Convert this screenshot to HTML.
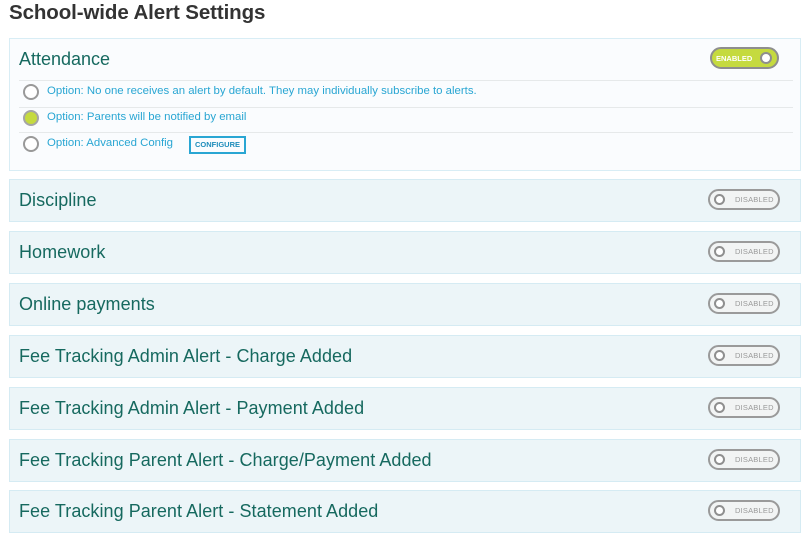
<!DOCTYPE html>
<html><head><meta charset="utf-8"><style>
*{margin:0;padding:0;box-sizing:border-box}
body{width:809px;height:538px;background:#fff;font-family:"Liberation Sans",sans-serif;position:relative;overflow:hidden}
h1{position:absolute;left:9px;top:1px;font-size:20.5px;font-weight:bold;color:#333;letter-spacing:-0.1px}
.p{position:absolute;left:9px;width:792px;height:43px;background:#ecf5f8;border:1px solid #d5ebf3}
.p .t{position:absolute;left:9px;top:10px;font-size:18px;color:#16695f;letter-spacing:0.05px}
.tg{position:absolute;right:20px;top:9px;width:72px;height:21px;border:2px solid #9a9a9a;border-radius:11px;background:#f2f4f4}
.tg .k{position:absolute;left:4px;top:3px;width:11px;height:11px;border:2px solid #8f8f8f;border-radius:50%;background:#fff}
.tg span{position:absolute;left:25px;top:4px;font-size:7.5px;color:#999;letter-spacing:0.2px}
.att{position:absolute;left:9px;top:38px;width:792px;height:133px;background:#fafcfe;border:1px solid #d8edf5}
.att .t{position:absolute;left:9px;top:10px;font-size:18px;color:#16695f}
.en{position:absolute;left:700px;top:8px;width:69px;height:22px;border:2px solid #8e8e8e;border-radius:11px;background:#c5da3f}
.en span{position:absolute;left:4px;top:5px;font-size:7.5px;color:#fff;font-weight:bold}
.en .k{position:absolute;right:5px;top:3px;width:12px;height:12px;border:2px solid #8e8e8e;border-radius:50%;background:#fff}
.ln{position:absolute;left:9px;width:774px;height:1px;background:#e6e9ea}
.o{position:absolute;left:13px;width:16px;height:16px;border:2px solid #999;border-radius:50%;background:#fff}
.o.on{background:#c5da3f;border-color:#a5a5a5}
.ot{position:absolute;left:37px;font-size:11.4px;color:#29a6d3}
.cf{position:absolute;left:179px;width:57px;height:18px;border:2px solid #29a6d3;font-size:7.5px;color:#1e8dbb;text-align:center;line-height:14px;font-weight:bold}
</style></head><body>
<h1>School-wide Alert Settings</h1>
<div class="att">
<div class="t">Attendance</div>
<div class="en"><span>ENABLED</span><div class="k"></div></div>
<div class="ln" style="top:41px"></div>
<div class="o" style="top:45px"></div><div class="ot" style="top:46px">Option: No one receives an alert by default. They may individually subscribe to alerts.</div>
<div class="ln" style="top:68px"></div>
<div class="o on" style="top:71px"></div><div class="ot" style="top:72px">Option: Parents will be notified by email</div>
<div class="ln" style="top:93px"></div>
<div class="o" style="top:97px"></div><div class="ot" style="top:98px">Option: Advanced Config</div>
<div class="cf" style="top:97px">CONFIGURE</div>
</div>
<div class="p" style="top:179px"><div class="t">Discipline</div><div class="tg"><div class="k"></div><span>DISABLED</span></div></div>
<div class="p" style="top:231px"><div class="t">Homework</div><div class="tg"><div class="k"></div><span>DISABLED</span></div></div>
<div class="p" style="top:283px"><div class="t">Online payments</div><div class="tg"><div class="k"></div><span>DISABLED</span></div></div>
<div class="p" style="top:335px"><div class="t">Fee Tracking Admin Alert - Charge Added</div><div class="tg"><div class="k"></div><span>DISABLED</span></div></div>
<div class="p" style="top:387px"><div class="t">Fee Tracking Admin Alert - Payment Added</div><div class="tg"><div class="k"></div><span>DISABLED</span></div></div>
<div class="p" style="top:439px"><div class="t">Fee Tracking Parent Alert - Charge/Payment Added</div><div class="tg"><div class="k"></div><span>DISABLED</span></div></div>
<div class="p" style="top:490px"><div class="t">Fee Tracking Parent Alert - Statement Added</div><div class="tg"><div class="k"></div><span>DISABLED</span></div></div>
</body></html>
